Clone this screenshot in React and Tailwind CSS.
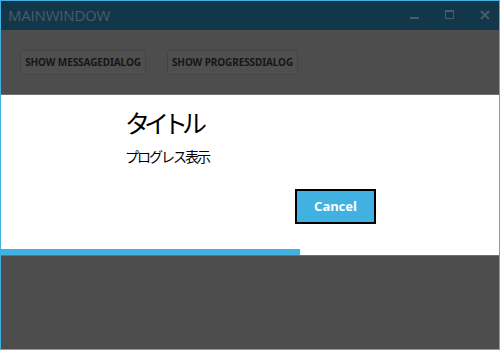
export default function App() {
  return (
    <div className="w-[500px] h-[350px] border border-[#41b1e1] bg-[#4d4d4d] flex flex-col overflow-hidden font-['Noto_Sans',sans-serif]">
      <div className="h-[29px] shrink-0 bg-[#12374a] flex items-center justify-between pl-[7px]">
        <span className="text-[15px] leading-none text-[#4b5c66] font-['Open_Sans',sans-serif] tracking-[-0.2px] mt-[-1px]">MAINWINDOW</span>
        <div className="flex items-center h-full pr-[9px]">
          <div className="w-[9px] h-[2px] bg-[#4b5c66] mt-[5px]" />
          <div className="w-[9px] h-[9px] border border-t-2 border-[#4b5c66] mt-[-2px] ml-[26px]" />
          <svg width="10" height="10" viewBox="0 0 10 10" className="mt-[-2px] ml-[26px]">
            <path d="M1 1 L9 9 M9 1 L1 9" stroke="#4b5c66" strokeWidth="2" />
          </svg>
        </div>
      </div>
      <div className="flex gap-[21px] pl-[19px] pt-[20px]">
        <div className="h-[25px] w-[126px] rounded-[3px] border border-[#444444] bg-[#4f4f4f] flex items-center justify-center text-[10px] font-bold text-[#161616] tracking-[-0.1px]">SHOW MESSAGEDIALOG</div>
        <div className="h-[25px] w-[131px] rounded-[3px] border border-[#444444] bg-[#4f4f4f] flex items-center justify-center text-[10px] font-bold text-[#161616] tracking-[-0.1px]">SHOW PROGRESSDIALOG</div>
      </div>
      <div className="mt-[19px] border-y border-[#707070] bg-white flex flex-col">
        <div className="h-[154px] pl-[124px] pt-[10px]">
          <div className="text-[25px] leading-[34px] text-black font-['Noto_Sans_CJK_JP',sans-serif] tracking-[-6px]">タイトル</div>
          <div className="text-[14px] leading-[20px] mt-[7px] text-black font-['Noto_Sans_CJK_JP',sans-serif] tracking-[-2px]">プログレス表示</div>
          <div className="flex justify-start pl-[170px] mt-[23px]">
            <div className="w-[81px] h-[35px] border-2 border-black bg-[#41b1e1] flex items-center justify-center text-white text-[13px] font-bold">Cancel</div>
          </div>
        </div>
        <div className="h-[6px] w-[299px] bg-[#41b1e1]" />
      </div>
    </div>
  );
}
